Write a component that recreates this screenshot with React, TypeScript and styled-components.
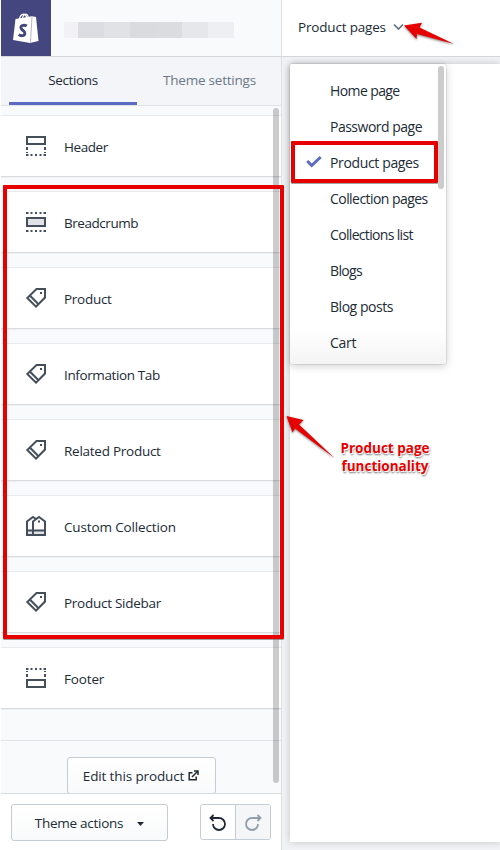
import React from 'react';
import styled, { createGlobalStyle } from 'styled-components';

const Global = createGlobalStyle`
  * { box-sizing: border-box; }
  body { margin: 0; background: #fff; font-family: "Open Sans", "Noto Sans", sans-serif; color: #212b36; font-size: 13.5px; }
  button { font: inherit; color: inherit; margin: 0; }
  svg { display: block; flex: none; }
`;

const Editor = styled.div`
  position: relative;
  width: 500px;
  height: 850px;
  padding-left: 1px;
  display: flex;
  overflow: hidden;
  background: #fff;
`;

const Sidebar = styled.aside`
  width: 281px;
  display: flex;
  flex-direction: column;
  background: #f9fafc;
  border-right: 1px solid #dcdfe4;
`;

const Brand = styled.header`
  height: 57px;
  flex: none;
  display: flex;
  align-items: center;
  border-bottom: 1px solid #d5d8dc;
  box-shadow: 0 1px 1px #e8eaee;
`;

const Logo = styled.div`
  width: 50px;
  height: 56px;
  background: #43467f;
`;

const StoreName = styled.div`
  display: flex;
  margin: 3px 0 0 13px;
`;

const Block = styled.span<{ $w: number; $c: string }>`
  width: ${p => p.$w}px;
  height: 16px;
  background: ${p => p.$c};
`;

const Tabs = styled.nav`
  height: 49px;
  flex: none;
  display: flex;
  padding-left: 8px;
  background: #f4f5f8;
  border-bottom: 1px solid #dfe2e6;
`;

const Tab = styled.div<{ $active?: boolean }>`
  width: 128px;
  height: 48px;
  flex: none;
  display: flex;
  justify-content: center;
  padding-top: 14px;
  line-height: 19px;
  color: ${p => (p.$active ? '#212b36' : '#6b7886')};
  border-bottom: ${p => (p.$active ? '3px solid #5c6ac4' : '0')};
  & + & { width: 145px; }
`;

const Label = styled.span<{ $s?: number }>`
  white-space: nowrap;
  letter-spacing: ${p => p.$s ?? 0}px;
`;

const SectionArea = styled.div`
  flex: 1;
  min-height: 0;
  overflow: hidden;
  position: relative;
  padding-top: 9px;
`;

const SectionList = styled.div`
  display: grid;
  gap: 14px;
`;

const SectionRow = styled.div`
  height: 62px;
  display: flex;
  align-items: center;
  gap: 17px;
  padding: 1px 0 0 24px;
  background: #fff;
  border-top: 1px solid #e7e9ec;
  border-bottom: 1px solid #d9dcdf;
  box-shadow: 0 1px 1px #eff1f3;
  & > svg { margin-top: -1px; }
`;

const EditArea = styled.div`
  margin-top: 31px;
  height: 54px;
  border-top: 1px solid #dfe3e8;
  padding-top: 16px;
  display: flex;
  justify-content: center;
`;

const Button = styled.button<{ $w: number; $h: number; $gap?: number }>`
  width: ${p => p.$w}px;
  height: ${p => p.$h}px;
  display: flex;
  align-items: center;
  justify-content: center;
  gap: ${p => p.$gap ?? 0}px;
  padding: 0;
  background: linear-gradient(#fff, #f9fafb);
  border: 1px solid #c4cdd5;
  border-radius: 3px;
`;

const Scrollbar = styled.div<{ $x: number; $y: number; $h: number; $w: number }>`
  position: absolute;
  left: ${p => p.$x}px;
  top: ${p => p.$y}px;
  width: ${p => p.$w}px;
  height: ${p => p.$h}px;
  border-radius: 3px;
  background: rgba(0, 0, 0, 0.2);
`;

const Footer = styled.footer`
  height: 57px;
  flex: none;
  display: flex;
  justify-content: space-between;
  padding: 10px 10px 0;
  background: #fff;
  border-top: 1px solid #d9dcdf;
`;

const History = styled.div`
  display: flex;
  width: 71px;
  height: 36px;
  border: 1px solid #c4cdd5;
  border-radius: 3px;
  overflow: hidden;
`;

const HistoryButton = styled.button<{ $off?: boolean }>`
  flex: 1;
  padding: 2px 0 0;
  border: 0;
  display: grid;
  place-items: center;
  background: ${p => (p.$off ? '#f4f6f8' : '#fff')};
  & + & { border-left: 1px solid #c4cdd5; }
`;

const Main = styled.main`
  flex: 1;
  display: flex;
  flex-direction: column;
  background: #f1f2f5;
`;

const TopBar = styled.div`
  height: 57px;
  flex: none;
  display: flex;
  align-items: center;
  padding: 0 0 2px 16px;
  gap: 7px;
  background: #fff;
  border-bottom: 1px solid #d5d6da;
`;

const Preview = styled.div`
  flex: 1;
  margin: 7px 0 8px 8px;
  background: #fff;
  box-shadow: 0 0 7px rgba(0, 0, 0, 0.2);
`;

const Menu = styled.div`
  position: absolute;
  left: 290px;
  top: 64px;
  width: 156px;
  height: 300px;
  padding-top: 8px;
  font-size: 14px;
  border-radius: 3px;
  background: linear-gradient(#fff 88%, #f4f4f4);
  box-shadow: 0 0 0 1px rgba(60, 70, 80, 0.1), 0 2px 9px rgba(0, 0, 0, 0.2);
`;

const MenuItem = styled.div`
  height: 36px;
  display: grid;
  grid-template-columns: 24px 1fr;
  align-items: center;
  padding-left: 16px;
`;

const Highlight = styled.div<{ $x: number; $y: number; $w: number; $h: number }>`
  position: absolute;
  left: ${p => p.$x}px;
  top: ${p => p.$y}px;
  width: ${p => p.$w}px;
  height: ${p => p.$h}px;
  border: 4px solid #e60000;
  border-radius: 1px;
  box-shadow: 0 1px 0 rgba(90, 90, 90, 0.55);
`;

const Pointer = styled.svg<{ $x: number; $y: number }>`
  position: absolute;
  left: ${p => p.$x}px;
  top: ${p => p.$y}px;
  filter: drop-shadow(0 1px 1px rgba(0, 0, 0, 0.5));
`;

const Note = styled.div`
  position: absolute;
  left: 325px;
  top: 439px;
  width: 120px;
  text-align: center;
  font-size: 13.5px;
  font-weight: 700;
  line-height: 18px;
  color: #e60000;
  text-shadow: 0 0 1px #fff, 1px 1px 0 #fff, -1px -1px 0 #fff, 1px 2px 2px rgba(0, 0, 0, 0.6);
`;

const ink = '#454f5b';

const HeaderIcon = () => (
  <svg width="22" height="22" viewBox="0 0 22 22" fill="none" stroke={ink} strokeWidth="2">
    <path d="M2 2h18v7H2z" />
    <path d="M2 12v3M2 17v1M20 12v3M20 17v1" />
    <path d="M1 20h2.500M5.500 20h2M10 20h2M14.500 20h2M18.500 20h2.500" />
  </svg>
);

const FooterIcon = () => (
  <svg width="22" height="22" viewBox="0 0 22 22" fill="none" stroke={ink} strokeWidth="2">
    <path d="M2 13h18v7H2z" />
    <path d="M2 4v1M2 7v3M20 4v1M20 7v3" />
    <path d="M1 2h2.500M5.500 2h2M10 2h2M14.500 2h2M18.500 2h2.500" />
  </svg>
);

const BlockIcon = () => (
  <svg width="22" height="22" viewBox="0 0 22 22" fill="none" stroke={ink} strokeWidth="2">
    <path d="M2 7h18v8H2z" fill="#dfe3e8" />
    <path d="M1 2h2.500M5.500 2h2M10 2h2M14.500 2h2M18.500 2h2.500" />
    <path d="M1 20h2.500M5.500 20h2M10 20h2M14.500 20h2M18.500 20h2.500" />
  </svg>
);

const TagIcon = () => (
  <svg width="22" height="22" viewBox="0 0 22 22" fill="none" stroke={ink} strokeWidth="2">
    <path d="M11.500 2H20v8.500L11 19.700 2.300 11z" />
    <path d="M4.800 8.500l8.700 8.700" />
    <path d="M15 5h2v2h-2z" fill={ink} stroke="none" />
  </svg>
);

const CollectionIcon = () => (
  <svg width="22" height="22" viewBox="0 0 22 22" fill="none" stroke={ink} strokeWidth="2">
    <path d="M8 15.500h12V20H8zM2 15.500h6V20H2z" fill="#dfe3e8" />
    <path d="M8 20V6.500L14 2l6 4.500V20zM8 20H2V6.500L8 2l3 2" />
    <path d="M13 5.500h2v2h-2z" fill={ink} stroke="none" />
  </svg>
);

const LogoMark = () => (
  <svg width="50" height="56" viewBox="0 0 50 56">
    <path d="M14.500 19L31 16.200l4 .8 2.500 24-8.500 2L12 40z" fill="#fff" />
    <path d="M31 17l-1.500 25.500" stroke="#8183aa" strokeWidth=".6" />
    <path d="M18.500 19c.5-4.500 4-6 6-4 1.300 1.300 1 3 1 3M21.500 18c.5-4 4-5 5.300-2.300l.5 2" fill="none" stroke="#fff" strokeWidth="1.300" />
    <path d="M25.700 26c-2-1.400-5.800-1-5.800 1.600 0 2.800 4.300 3 4 5.700-.3 2.900-4 3-6.200 1.300" fill="none" stroke="#43467f" strokeWidth="2.900" />
  </svg>
);

const UndoIcon = ({ color, flip }: { color: string; flip?: boolean }) => (
  <svg width="18" height="18" viewBox="0 0 18 18" fill="none" stroke={color} strokeWidth="1.800">
    <g transform={flip ? 'translate(18 0) scale(-1 1)' : undefined}>
      <path d="M1.500 4H10a6 6 0 1 1-6 6" />
      <path d="M4.500 1L1.500 4l3 3" />
    </g>
  </svg>
);

const sections = [
  { name: 'Header', icon: HeaderIcon, s: -0.45 },
  { name: 'Breadcrumb', icon: BlockIcon, s: -0.45 },
  { name: 'Product', icon: TagIcon, s: -0.28 },
  { name: 'Information Tab', icon: TagIcon, s: -0.38 },
  { name: 'Related Product', icon: TagIcon, s: -0.26 },
  { name: 'Custom Collection', icon: CollectionIcon, s: -0.14 },
  { name: 'Product Sidebar', icon: TagIcon, s: -0.27 },
  { name: 'Footer', icon: FooterIcon, s: -0.15 },
];

const pages = [
  { name: 'Home page', s: -0.6 },
  { name: 'Password page', s: -0.5 },
  { name: 'Product pages', s: -0.36, active: true },
  { name: 'Collection pages', s: -0.55 },
  { name: 'Collections list', s: -0.67 },
  { name: 'Blogs', s: -0.65 },
  { name: 'Blog posts', s: -0.46 },
  { name: 'Cart', s: -0.3 },
];

const nameBlocks: [number, string][] = [
  [14, '#f2f2f4'], [26, '#dcdde2'], [26, '#e1e2e6'], [26, '#dadbdf'], [26, '#dbdce0'], [26, '#e6e7ea'], [26, '#eeeff2'],
];

export default function App() {
  return (
    <>
      <Global />
      <Editor>
        <Sidebar>
          <Brand>
            <Logo><LogoMark /></Logo>
            <StoreName>
              {nameBlocks.map(([w, c], i) => <Block key={i} $w={w} $c={c} />)}
            </StoreName>
          </Brand>
          <Tabs>
            <Tab $active><Label $s={-0.35}>Sections</Label></Tab>
            <Tab><Label $s={-0.22}>Theme settings</Label></Tab>
          </Tabs>
          <SectionArea>
            <SectionList>
              {sections.map(({ name, icon: Icon, s }) => (
                <SectionRow key={name}><Icon /><Label $s={s}>{name}</Label></SectionRow>
              ))}
            </SectionList>
            <EditArea>
              <Button $w={149} $h={37} $gap={4}>
                <Label $s={-0.13}>Edit this product</Label>
                <svg width="11" height="11" viewBox="0 0 11 11" fill="none" stroke="#212b36" strokeWidth="1.500">
                  <path d="M4.500 2.700H1.200v7h7V6.500M4 7l5.500-5.500M6 1h4v4" />
                </svg>
              </Button>
            </EditArea>
            <Scrollbar $x={272} $y={2} $w={6} $h={675} />
          </SectionArea>
          <Footer>
            <Button $w={157} $h={37}>
              <Label $s={-0.27}>Theme actions</Label>
              <svg width="21" height="8" viewBox="0 0 21 8"><path d="M14 3h7l-3.500 4z" fill="#212b36" /></svg>
            </Button>
            <History>
              <HistoryButton><UndoIcon color="#212b36" /></HistoryButton>
              <HistoryButton $off><UndoIcon color="#919eab" flip /></HistoryButton>
            </History>
          </Footer>
        </Sidebar>
        <Main>
          <TopBar>
            <Label $s={-0.18}>Product pages</Label>
            <svg width="11" height="8" viewBox="0 0 11 8"><path d="M1 1.500l4.500 4.500L10 1.500" fill="none" stroke="#637381" strokeWidth="1.700" /></svg>
          </TopBar>
          <Preview />
        </Main>
        <Menu>
          {pages.map(p => (
            <MenuItem key={p.name}>
              {p.active ? (
                <svg width="16" height="14" viewBox="0 0 16 14"><path d="M1.200 6l4.500 4.500L14.700 2" fill="none" stroke="#5c6ac4" strokeWidth="3" /></svg>
              ) : <span />}
              <Label $s={p.s}>{p.name}</Label>
            </MenuItem>
          ))}
          <Scrollbar $x={148} $y={2} $w={6} $h={123} />
        </Menu>
        <Highlight $x={3} $y={185} $w={281} $h={454} />
        <Highlight $x={291} $y={141} $w={147} $h={42} />
        <Pointer $x={400} $y={20} width="56" height="28" viewBox="0 0 56 28">
          <path d="M4 5.500L22 2.800l-2.500 4.700L54 24 17 14l-.5 5z" fill="#e60000" />
        </Pointer>
        <Pointer $x={284} $y={412} width="52" height="50" viewBox="0 0 52 50">
          <path d="M2.500 4l17 4-4.500 4.500L50.500 46 11 16.500 8.500 20.500z" fill="#e60000" />
        </Pointer>
        <Note>Product page<br />functionality</Note>
      </Editor>
    </>
  );
}
